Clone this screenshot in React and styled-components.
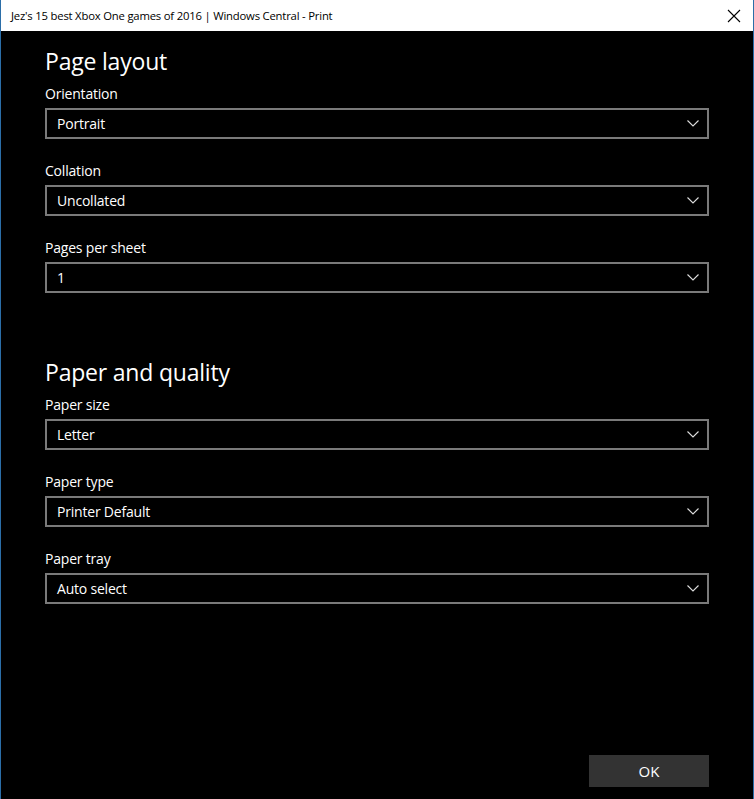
import styled, { createGlobalStyle } from "styled-components";

const Global = createGlobalStyle`
  html, body { margin: 0; padding: 0; background: #000; }
  * { box-sizing: border-box; }
`;

const Window = styled.div`
  width: 754px;
  height: 799px;
  display: flex;
  flex-direction: column;
  background: #000;
  border-left: 1px solid #2b6ea8;
  border-right: 1px solid #2b6ea8;
  font-family: "Open Sans", "Noto Sans", sans-serif;
  color: #fff;
`;

const TitleBar = styled.div`
  height: 31px;
  flex: none;
  background: #fff;
  color: #000;
  display: flex;
  align-items: center;
  justify-content: space-between;
  padding: 0 12px 0 10px;
  font-size: 11.3px;
  letter-spacing: -0.2px;
`;

const Close = styled.div`
  width: 14px;
  height: 14px;
  display: flex;
`;

const Body = styled.div`
  flex: 1;
  display: flex;
  flex-direction: column;
  padding: 13px 44px 12px 44px;
`;

const Heading = styled.h2`
  margin: 0 0 6px;
  height: 34px;
  line-height: 34px;
  font-size: 23px;
  font-weight: 400;
  letter-spacing: -0.2px;
  margin-top: ${({ $first }) => ($first ? "0" : "62px")};
`;

const Fields = styled.div`
  display: flex;
  flex-direction: column;
  gap: 22px;
`;

const Field = styled.div`
  display: flex;
  flex-direction: column;
  gap: 4px;
`;

const Label = styled.div`
  height: 20px;
  line-height: 20px;
  font-size: 14px;
  letter-spacing: -0.2px;
  color: #fff;
`;

const Select = styled.div`
  height: 31px;
  border: 2px solid #7a7a7a;
  display: flex;
  align-items: center;
  justify-content: space-between;
  padding: 0 8px 0 10px;
  font-size: 14px;
  letter-spacing: -0.2px;
`;

const Footer = styled.div`
  margin-top: auto;
  display: flex;
  justify-content: flex-end;
`;

const OkButton = styled.div`
  width: 120px;
  height: 32px;
  background: #333;
  display: flex;
  align-items: center;
  justify-content: center;
  font-size: 15px;
`;

const Chevron = () => (
  <svg width="12" height="7" viewBox="0 0 12 7">
    <path d="M0.5 0.5 L6 6 L11.5 0.5" fill="none" stroke="#ddd" strokeWidth="1.1" />
  </svg>
);

const Dropdown = ({ label, value }) => (
  <Field>
    <Label>{label}</Label>
    <Select>
      {value}
      <Chevron />
    </Select>
  </Field>
);

export default function App() {
  return (
    <>
      <Global />
      <Window>
        <TitleBar>
          Jez's 15 best Xbox One games of 2016 | Windows Central - Print
          <Close>
            <svg width="14" height="14" viewBox="0 0 14 14">
              <path d="M1 1 L13 13 M13 1 L1 13" stroke="#000" strokeWidth="1.1" />
            </svg>
          </Close>
        </TitleBar>
        <Body>
          <Heading $first>Page layout</Heading>
          <Fields>
            <Dropdown label="Orientation" value="Portrait" />
            <Dropdown label="Collation" value="Uncollated" />
            <Dropdown label="Pages per sheet" value="1" />
          </Fields>
          <Heading>Paper and quality</Heading>
          <Fields>
            <Dropdown label="Paper size" value="Letter" />
            <Dropdown label="Paper type" value="Printer Default" />
            <Dropdown label="Paper tray" value="Auto select" />
          </Fields>
          <Footer>
            <OkButton>OK</OkButton>
          </Footer>
        </Body>
      </Window>
    </>
  );
}
